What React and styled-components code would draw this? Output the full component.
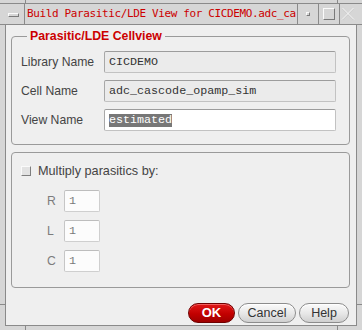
import React from "react";
import styled, { createGlobalStyle } from "styled-components";

const Global = createGlobalStyle`
  html, body { margin: 0; padding: 0; background: #d6d6d6; }
  body { font-family: "Liberation Sans", Arial, sans-serif; }
  * { box-sizing: border-box; }
`;

const Frame = styled.div`
  position: relative;
  width: 362px;
  height: 330px;
  background: #d6d6d6;
  display: flex;
  flex-direction: column;
  padding-top: 3px;
  overflow: hidden;
`;

const Tick = styled.span`
  position: absolute;
  background: #8a8a8a;
`;

const TitleBar = styled.div`
  display: flex;
  height: 22px;
  border-top: 1px solid #8a8a8a;
  border-bottom: 1px solid #8a8a8a;
`;

const Cell = styled.div`
  width: ${(p) => p.$w}px;
  flex: ${(p) => (p.$w ? "none" : "1")};
  border-right: ${(p) => (p.$last ? "none" : "1px solid #8a8a8a")};
  display: flex;
  align-items: center;
  justify-content: ${(p) => p.$justify || "center"};
  overflow: hidden;
`;

const TitleText = styled.div`
  font-family: "DejaVu Sans Mono", "Liberation Mono", monospace;
  font-size: 11px;
  letter-spacing: -0.37px;
  color: #cc0000;
  white-space: nowrap;
  padding-left: 2px;
  line-height: 20px;
`;

const Bevel = styled.span`
  display: block;
  width: ${(p) => p.$w}px;
  height: ${(p) => p.$h}px;
  border-top: 1px solid #fbfbfb;
  border-left: 1px solid #fbfbfb;
  border-bottom: 1px solid #7a7a7a;
  border-right: 1px solid #7a7a7a;
  margin: ${(p) => p.$m || "0"};
`;

const Body = styled.div`
  flex: 1;
  display: flex;
  padding: 0 5px 4px 5px;
`;

const Window = styled.div`
  flex: 1;
  background: #efefef;
  border-left: 1px solid #8a8a8a;
  border-right: 1px solid #8a8a8a;
  border-bottom: 1px solid #8a8a8a;
  display: flex;
  flex-direction: column;
  padding: 0 6px 2px 5px;
`;

const Group = styled.fieldset`
  margin: ${(p) => p.$mt}px 0 0 0;
  padding: ${(p) => p.$pad};
  border: 1px solid #9a9a9a;
  border-radius: 4px;
  min-inline-size: 0;
  display: flex;
  flex-direction: column;
  gap: ${(p) => p.$gap}px;
`;

const Legend = styled.legend`
  font-family: "Liberation Sans", Arial, sans-serif;
  font-weight: bold;
  font-size: 12.3px;
  line-height: 14px;
  color: #cc0000;
  padding: 0 3px;
  margin-left: 6px;
`;

const FormRow = styled.div`
  display: grid;
  grid-template-columns: ${(p) => p.$cols};
  align-items: center;
  padding-left: ${(p) => p.$indent || 0}px;
  margin-top: ${(p) => p.$mt || 0}px;
`;

const Label = styled.span`
  font-family: "Liberation Sans", Arial, sans-serif;
  font-size: ${(p) => p.$size || 12.2}px;
  color: ${(p) => (p.$dim ? "#7c7c7c" : "#444444")};
  white-space: nowrap;
`;

const Field = styled.div`
  height: 22px;
  width: ${(p) => (p.$w ? p.$w + "px" : "auto")};
  border: 1px solid ${(p) => (p.$dim ? "#cfcfcf" : "#c2c2c2")};
  border-top-color: ${(p) => (p.$dim ? "#bdbdbd" : "#9c9c9c")};
  border-left-color: ${(p) => (p.$dim ? "#c6c6c6" : "#a8a8a8")};
  border-radius: 2px;
  background: ${(p) => p.$bg};
  display: flex;
  align-items: center;
  padding-left: 4px;
  font-family: "Liberation Mono", "DejaVu Sans Mono", monospace;
  font-size: 11.7px;
  color: ${(p) => (p.$dim ? "#7a7a7a" : "#333333")};
  white-space: nowrap;
  overflow: hidden;
`;

const Selected = styled.span`
  background: #777777;
  color: #ffffff;
  padding: 0 0 1px 0;
  line-height: 12px;
`;

const CheckRow = styled.label`
  display: flex;
  align-items: center;
  gap: 7px;
  height: 14px;
`;

const CheckBox = styled.span`
  width: 10px;
  height: 10px;
  background: #e2e2e2;
  border-top: 1px solid #fafafa;
  border-left: 1px solid #fafafa;
  border-bottom: 1px solid #7e7e7e;
  border-right: 1px solid #7e7e7e;
`;

const Spacer = styled.div`
  flex: 1;
`;

const Buttons = styled.div`
  display: flex;
  justify-content: flex-end;
  gap: 3px;
  padding-right: 1px;
`;

const Button = styled.button`
  height: 20px;
  width: ${(p) => p.$w}px;
  border-radius: 10px;
  padding: 0;
  font-family: "Liberation Sans", Arial, sans-serif;
  font-size: ${(p) => (p.$primary ? 13 : 12.5)}px;
  font-weight: ${(p) => (p.$primary ? "bold" : "normal")};
  color: ${(p) => (p.$primary ? "#ffffff" : "#333333")};
  border: 1px solid ${(p) => (p.$primary ? "#6e0000" : "#8c8c8c")};
  background: ${(p) =>
    p.$primary
      ? "linear-gradient(#e01818, #c20000 55%, #9e0000)"
      : "linear-gradient(#fbfbfb, #e6e6e6 55%, #cfcfcf)"};
  box-shadow: inset 0 1px 0 ${(p) => (p.$primary ? "rgba(255,140,140,0.6)" : "#ffffff")};
  line-height: 18px;
`;

export default function App() {
  return (
    <>
      <Global />
      <Frame>
        <Tick style={{ left: 337, top: 0, width: 1, height: 3 }} />
        <Tick style={{ left: 25, top: 0, width: 1, height: 3 }} />
        <Tick style={{ left: 25, bottom: 0, width: 1, height: 4 }} />
        <Tick style={{ left: 337, bottom: 0, width: 1, height: 4 }} />
        <Tick style={{ left: 0, top: 304, width: 5, height: 1 }} />
        <Tick style={{ right: 0, top: 304, width: 5, height: 1 }} />
        <TitleBar>
          <Cell $w={25}>
            <Bevel $w={11} $h={4} $m="2px 0 0 2px" />
          </Cell>
          <Cell $justify="flex-start">
            <TitleText>Build Parasitic/LDE View for CICDEMO.adc_ca</TitleText>
          </Cell>
          <Cell $w={21}>
            <Bevel $w={4} $h={4} />
          </Cell>
          <Cell $w={21}>
            <Bevel $w={12} $h={12} />
          </Cell>
          <Cell $w={22} $last $justify="flex-start">
            <svg width="14" height="14" viewBox="0 0 14 14" style={{ marginLeft: 1 }}>
              <path d="M1 1 L13 13 M13 1 L1 13" stroke="#f4f4f4" strokeWidth="3" fill="none" />
              <path d="M1 1 L13 13 M13 1 L1 13" stroke="#b0b0b0" strokeWidth="3" fill="none" opacity="0.55" />
              <path d="M1.5 1 L13 12.5 M12.5 1 L1 12.5" stroke="#f8f8f8" strokeWidth="1" fill="none" />
            </svg>
          </Cell>
        </TitleBar>
        <Body>
          <Window>
            <Group $mt={4} $pad="8px 13px 13px 9px" $gap={7}>
              <Legend>Parasitic/LDE Cellview</Legend>
              <FormRow $cols="83px 1fr">
                <Label>Library Name</Label>
                <Field $bg="#ebebeb">CICDEMO</Field>
              </FormRow>
              <FormRow $cols="83px 1fr">
                <Label>Cell Name</Label>
                <Field $bg="#ebebeb">adc_cascode_opamp_sim</Field>
              </FormRow>
              <FormRow $cols="83px 1fr">
                <Label>View Name</Label>
                <Field $bg="#ffffff">
                  <Selected>estimated</Selected>
                </Field>
              </FormRow>
            </Group>
            <Group $mt={7} $pad="11px 13px 15px 9px" $gap={8}>
              <CheckRow>
                <CheckBox />
                <Label $size={12.7}>Multiply parasitics by:</Label>
              </CheckRow>
              <FormRow $cols="17px 36px" $indent={26} $mt={4}>
                <Label $dim>R</Label>
                <Field $dim $w={36} $bg="#fcfcfc">1</Field>
              </FormRow>
              <FormRow $cols="17px 36px" $indent={26}>
                <Label $dim>L</Label>
                <Field $dim $w={36} $bg="#fcfcfc">1</Field>
              </FormRow>
              <FormRow $cols="17px 36px" $indent={26}>
                <Label $dim>C</Label>
                <Field $dim $w={36} $bg="#fcfcfc">1</Field>
              </FormRow>
            </Group>
            <Spacer />
            <Buttons>
              <Button $primary $w={47}>OK</Button>
              <Button $w={58}>Cancel</Button>
              <Button $w={50}>Help</Button>
            </Buttons>
          </Window>
        </Body>
      </Frame>
    </>
  );
}
